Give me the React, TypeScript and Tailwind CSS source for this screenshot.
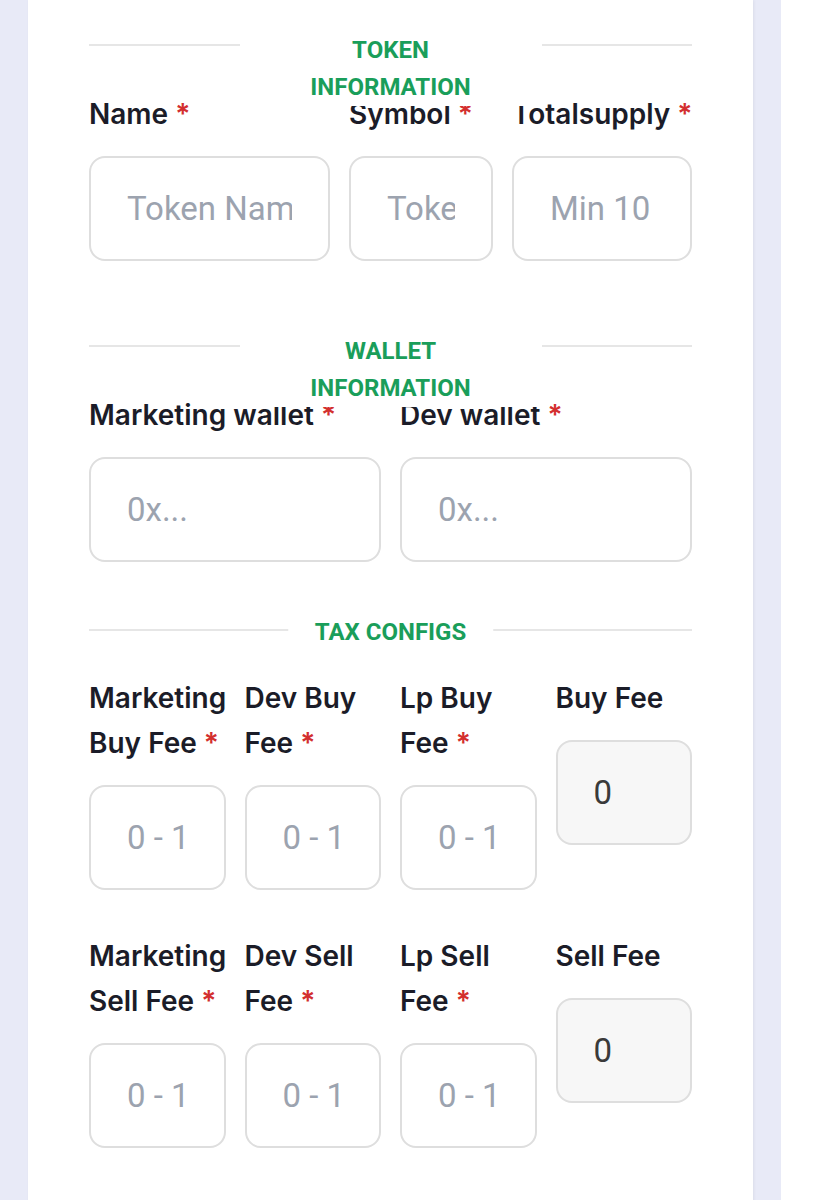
import React from "react";

function SectionHeader({ title, wrap }: { title: string; wrap?: boolean }) {
  return (
    <div className="relative h-[2px] w-full bg-[#e6e6e6]">
      <div
        className={
          "absolute left-1/2 -translate-x-1/2 bg-white px-[27px] text-center text-[24px] font-bold leading-[37px] text-[#1a9e5a] " +
          (wrap ? "top-[-12px] w-[302px]" : "top-[-15px] whitespace-nowrap")
        }
        style={{ fontFamily: "Roboto, 'Liberation Sans', sans-serif" }}
      >
        {wrap ? <div className="mx-auto w-min">{title}</div> : title}
      </div>
    </div>
  );
}

function Field({
  label,
  required = true,
  placeholder,
  value,
  disabled,
}: {
  label: string;
  required?: boolean;
  placeholder?: string;
  value?: string;
  disabled?: boolean;
}) {
  return (
    <div className="flex min-w-0 flex-col">
      <label
        className="text-[28px] font-semibold leading-[45px] text-[#1b1c28]"
        style={{ fontFamily: "Inter, 'Noto Sans', sans-serif" }}
      >
        {label}
        {required && <span className="text-[#d32f2f]"> *</span>}
      </label>
      <input
        className={
          "mt-[19px] h-[105px] w-full min-w-0 rounded-[16px] border-2 border-[#dedede] px-[36px] text-[33px] text-[#3a3a3a] outline-none placeholder:text-[#9ca3af] " +
          (disabled ? "bg-[#f7f7f7]" : "bg-white")
        }
        style={{ fontFamily: "Roboto, 'Liberation Sans', sans-serif" }}
        placeholder={placeholder}
        defaultValue={value}
        readOnly={disabled}
      />
    </div>
  );
}

export default function App() {
  return (
    <div className="flex min-h-[1200px] w-full bg-white">
      <div className="flex w-[781px] shrink-0 bg-[#e8eaf7] pl-[28px] pr-[28px]">
        <div className="w-[725px] shrink-0 bg-white px-[61px] pt-[44px] pb-[60px] shadow-[1px_0_3px_rgba(0,0,0,0.06)]">
          <SectionHeader title="TOKEN INFORMATION" wrap />
          <div className="mt-[46px] mb-[84px] flex gap-[19px]">
            <div className="w-[241px] shrink-0">
              <Field label="Name" placeholder="Token Name" />
            </div>
            <div className="w-[144px] shrink-0">
              <Field label="Symbol" placeholder="Token Symbol" />
            </div>
            <div className="min-w-0 flex-1 whitespace-nowrap">
              <Field label="Totalsupply" placeholder="Min 10" />
            </div>
          </div>

          <SectionHeader title="WALLET INFORMATION" wrap />
          <div className="mt-[46px] mb-[67px] grid grid-cols-2 gap-[19px]">
            <Field label="Marketing wallet" placeholder="0x..." />
            <Field label="Dev wallet" placeholder="0x..." />
          </div>

          <SectionHeader title="TAX CONFIGS" />
          <div className="mt-[45px] grid grid-cols-4 items-start gap-x-[19px] gap-y-[44px]">
            <Field label="Marketing Buy Fee" placeholder="0 - 1" />
            <Field label="Dev Buy Fee" placeholder="0 - 1" />
            <Field label="Lp Buy Fee" placeholder="0 - 1" />
            <Field label="Buy Fee" required={false} value="0" disabled />
            <Field label="Marketing Sell Fee" placeholder="0 - 1" />
            <Field label="Dev Sell Fee" placeholder="0 - 1" />
            <Field label="Lp Sell Fee" placeholder="0 - 1" />
            <Field label="Sell Fee" required={false} value="0" disabled />
          </div>
        </div>
      </div>
      <div className="flex-1 bg-white" />
    </div>
  );
}
